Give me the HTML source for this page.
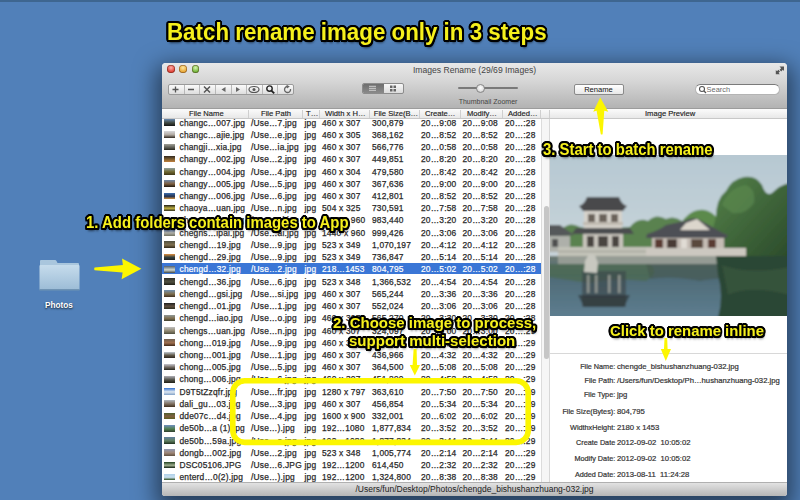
<!DOCTYPE html>
<html><head><meta charset="utf-8">
<style>
*{margin:0;padding:0;box-sizing:border-box}
html,body{width:800px;height:500px;overflow:hidden}
body{background:#5180b9;font-family:"Liberation Sans",sans-serif;position:relative}
.abs{position:absolute}
#topstrip{position:absolute;left:0;top:0;width:800px;height:2px;background:#3e6690}
#win{position:absolute;left:162px;top:63px;width:625px;height:433px;background:#fff;border-radius:4px 4px 3px 3px;overflow:hidden;
 box-shadow:0 8px 22px 6px rgba(0,0,0,0.5)}
#tb{position:absolute;left:0;top:0;width:625px;height:46px;background:linear-gradient(#e8e8e8,#d6d6d6 40%,#b3b3b3);border-bottom:1px solid #9c9c9c}
.tl{position:absolute;top:2.3px;width:7.6px;height:7.6px;border-radius:50%;box-shadow:inset 0 0 0 0.7px rgba(60,20,0,.45)}
#title{position:absolute;left:0;width:625px;top:2.2px;text-align:center;font-size:8.6px;color:#444;line-height:10px}
#seg{position:absolute;left:6px;top:21px;width:126px;height:11px;border:1px solid #9a9a9a;border-radius:2px;background:linear-gradient(#fafafa,#dedede);display:flex}
#seg div{flex:1;border-right:1px solid #b8b8b8;position:relative}
#seg div:last-child{border-right:none}
#hdr{position:absolute;left:0;top:46px;width:625px;height:10px;background:linear-gradient(#fbfbfb,#e8e8e8);border-bottom:1px solid #c8c8c8}
#hdr span{position:absolute;top:0px;font-size:7.6px;color:#222;-webkit-text-stroke:0.15px #222;white-space:nowrap;line-height:10px}
.vsep{position:absolute;top:1px;width:1px;height:8px;background:#cfcfcf}
#tbl{position:absolute;left:0;top:56px;width:379px;height:363px;overflow:hidden}
.row{position:absolute;left:0;width:379px;height:12.23px;margin-top:-119px}
.row span{position:absolute;top:0;line-height:12.23px;font-size:8.4px;letter-spacing:0.2px;color:#2a2a2a;white-space:nowrap;-webkit-text-stroke:0.25px #2a2a2a}
.row.sel::before{content:"";position:absolute;left:0;top:-0.8px;width:379px;height:11.1px;background:#3a76d6}
.row.sel span{color:#fff;-webkit-text-stroke:0.2px #fff}
.th{position:absolute;left:2.3px;top:2.6px;width:11px;height:6.6px;display:block;filter:blur(0.3px)}
#scroll{position:absolute;left:379px;top:56px;width:9px;height:363px;background:#f6f6f6;border-left:1px solid #dcdcdc;border-right:1px solid #d8d8d8}
#thumb{position:absolute;left:1.8px;top:87.4px;width:5.4px;height:153px;border-radius:3px;background:#c6c6c6}
#right{position:absolute;left:388px;top:46px;width:237px;height:373px;background:#fff}
.lab{position:absolute;right:171.8px;font-size:7.25px;color:#333;-webkit-text-stroke:0.2px #333;white-space:nowrap;line-height:10px;margin-top:-2.2px}
.val{position:absolute;left:67px;font-size:7.7px;color:#333;-webkit-text-stroke:0.2px #333;white-space:nowrap;line-height:10px;margin-top:-2.2px}
#status{position:absolute;left:0;top:419px;width:625px;height:14px;background:linear-gradient(#e2e2e2,#b6b6b6);border-top:1px solid #b0b0b0}
.ann{position:absolute;font-weight:bold;color:#f6f01c;white-space:nowrap;transform-origin:0 0;
 text-shadow:2px 0 0 #000,-2px 0 0 #000,0 2px 0 #000,0 -2px 0 #000,1.5px 1.5px 0 #000,-1.5px -1.5px 0 #000,1.5px -1.5px 0 #000,-1.5px 1.5px 0 #000,
 1px 0 0 #000,-1px 0 0 #000,0 1px 0 #000,0 -1px 0 #000,2px 1px 0 #000,-2px 1px 0 #000,2px -1px 0 #000,-2px -1px 0 #000,1px 2px 0 #000,-1px 2px 0 #000,1px -2px 0 #000,-1px -2px 0 #000,1px 2.5px 2.5px rgba(0,0,0,.6)}
</style></head><body>
<div id="topstrip"></div>

<!-- desktop folder -->
<svg class="abs" style="left:38px;top:258px" width="44" height="36" viewBox="0 0 44 36">
 <defs><linearGradient id="fg" x1="0" y1="0" x2="0" y2="1"><stop offset="0" stop-color="#c6dcec"/><stop offset="1" stop-color="#9cbcd6"/></linearGradient></defs>
 <path d="M2 3 Q2 2 3 2 L17 2 Q18 2 18.5 3 L19.5 5 L40 5 Q41 5 41 6 L41 10 L2 10 Z" fill="#a9c6dd"/>
 <path d="M1.5 8 Q1.5 7 2.5 7 L40.5 7 Q41.5 7 41.5 8 L41.5 31 Q41.5 32 40.5 32 L2.5 32 Q1.5 32 1.5 31 Z" fill="url(#fg)"/>
 <rect x="1.5" y="31" width="40" height="1.5" fill="#6f93b3"/>
</svg>
<div class="abs" style="left:45px;top:300.5px;font-size:8.2px;font-weight:bold;color:#fff;text-shadow:0 1px 2px rgba(0,0,0,.8)">Photos</div>

<div id="win">
 <div id="tb">
  <div class="tl" style="left:5px;top:2.4px;background:radial-gradient(circle at 50% 35%,#ffb0a8,#e0443a 60%,#a82a20)"></div>
  <div class="tl" style="left:17.4px;top:2.4px;background:radial-gradient(circle at 50% 35%,#ffe9a0,#e8a83a 60%,#b07820)"></div>
  <div class="tl" style="left:29.8px;top:2.4px;background:radial-gradient(circle at 50% 35%,#d8f5b0,#78b840 60%,#4a8a28)"></div>
  <div id="title">Images Rename (29/69 Images)</div>
  <div id="seg">
   <div></div><div></div><div></div><div></div><div></div><div></div><div></div><div></div>
  </div>
  <svg class="abs" style="left:6px;top:21px" width="126" height="11" viewBox="0 0 126 11">
   <g stroke="#555" stroke-width="1.3" fill="none">
    <path d="M4.5 5.5 H10.5 M7.5 2.5 V8.5"/>
    <path d="M20 5.5 H26"/>
    <path d="M36 2.5 L42 8.5 M42 2.5 L36 8.5" stroke-width="1.5"/>
   </g>
   <path d="M53.5 5.5 L57.5 3 V8 Z" fill="#666"/>
   <path d="M68 3 L72 5.5 L68 8 Z" fill="#666"/>
   <ellipse cx="86" cy="5.5" rx="5" ry="3" fill="none" stroke="#555" stroke-width="1.2"/>
   <circle cx="86" cy="5.5" r="1.5" fill="#555"/>
   <circle cx="101.5" cy="4.6" r="2.7" fill="none" stroke="#222" stroke-width="1.4"/>
   <path d="M103.4 6.6 L106.2 9.4" stroke="#222" stroke-width="1.9"/>
   <path d="M122.5 5 A3 3 0 1 1 119.5 2.5" fill="none" stroke="#666" stroke-width="1.3"/>
   <path d="M118.5 0.8 L121.8 2.6 L119 4.6 Z" fill="#666"/>
  </svg>
  <!-- view toggle -->
  <div class="abs" style="left:200px;top:20px;width:42px;height:11px;border:1px solid #8c8c8c;border-radius:2px;overflow:hidden;background:linear-gradient(#f8f8f8,#dcdcdc)">
   <div class="abs" style="left:0;top:0;width:21px;height:9px;background:linear-gradient(#6e6e6e,#8a8a8a)"></div>
  </div>
  <svg class="abs" style="left:200px;top:20px" width="42" height="11">
   <g stroke="#d8d8d8" stroke-width="0.9"><path d="M7 3.3H14M7 5.3H14M7 7.3H14"/></g>
   <g fill="#666"><rect x="28" y="2.5" width="2.5" height="2.5"/><rect x="31.5" y="2.5" width="2.5" height="2.5"/><rect x="28" y="6" width="2.5" height="2.5"/><rect x="31.5" y="6" width="2.5" height="2.5"/></g>
  </svg>
  <!-- slider -->
  <div class="abs" style="left:296px;top:24.3px;width:60px;height:2px;border-radius:1px;background:#7a7a7a"></div>
  <div class="abs" style="left:313.5px;top:20.8px;width:9px;height:9px;border-radius:50%;background:radial-gradient(circle at 50% 40%,#fff,#e0e0e0 60%,#a0a0a0);border:0.5px solid #888"></div>
  <div class="abs" style="left:296px;top:34.5px;width:60px;text-align:center;font-size:7px;color:#444;white-space:nowrap">Thumbnail Zoomer</div>
  <!-- rename button -->
  <div class="abs" style="left:411.5px;top:21px;width:50px;height:11px;border:1px solid #8a8a8a;border-radius:2px;background:linear-gradient(#ffffff,#e8e8e8);font-size:7.6px;line-height:9px;text-align:center;color:#111">Rename</div>
  <!-- search -->
  <div class="abs" style="left:532.5px;top:21px;width:85px;height:10.5px;border:1px solid #b4b4b4;border-top-color:#7a7a7a;border-radius:6px;background:#fff"></div>
  <svg class="abs" style="left:536px;top:22px" width="10" height="10"><circle cx="4" cy="4" r="2.5" fill="none" stroke="#555" stroke-width="1.1"/><path d="M5.8 5.8 L8 8" stroke="#555" stroke-width="1.3"/></svg>
  <div class="abs" style="left:544.6px;top:22px;font-size:7.4px;line-height:9px;color:#6a6a6a">Search</div>
  <svg class="abs" style="left:613px;top:2px" width="10" height="10"><g fill="#555"><path d="M4.5 1.5 H9 V6 L7.8 4.8 L6.2 6.4 L4.6 4.8 L6.2 3.2 Z"/><path d="M0.8 9.2 V5 L2 6.2 L3.4 4.8 L5 6.4 L3.6 7.8 L4.8 9.2 Z"/></g></svg>
 </div>

 <div id="hdr">
  <span style="left:27px">File Name</span>
  <div class="vsep" style="left:86px"></div>
  <span style="left:99px">File Path</span>
  <div class="vsep" style="left:139.6px"></div>
  <span style="left:144px">T…</span>
  <div class="vsep" style="left:157.4px"></div>
  <span style="left:163px">Width x H…</span>
  <div class="vsep" style="left:207px"></div>
  <span style="left:211.8px">File Size(B…</span>
  <div class="vsep" style="left:257px"></div>
  <span style="left:263px">Create…</span>
  <div class="vsep" style="left:298px"></div>
  <span style="left:305px">Modify…</span>
  <div class="vsep" style="left:340px"></div>
  <span style="left:346px">Added…</span>
  <div class="vsep" style="left:378px"></div>
  <div class="vsep" style="left:387px"></div>
  <span style="left:483px">Image Preview</span>
 </div>

 <div id="tbl">
<div class="row" style="top:116.60px">
<i class="th" style="background:linear-gradient(#6a8ab0,#404840 55%,#151515)"></i>
<span style="left:17.5px">changc…007.jpg</span>
<span style="left:89.0px">/Use…7.jpg</span>
<span style="left:142.5px">jpg</span>
<span style="left:160.0px">460 x 307</span>
<span style="left:210.0px">300,879</span>
<span style="left:259.0px">20…9:08</span>
<span style="left:300.5px">20…9:08</span>
<span style="left:343.0px">20…:28</span>
</div>
<div class="row" style="top:128.83px">
<i class="th" style="background:linear-gradient(#d8d8dc,#b0a8a0 55%,#302820)"></i>
<span style="left:17.5px">changc…ajie.jpg</span>
<span style="left:89.0px">/Use…e.jpg</span>
<span style="left:142.5px">jpg</span>
<span style="left:160.0px">460 x 305</span>
<span style="left:210.0px">368,162</span>
<span style="left:259.0px">20…8:52</span>
<span style="left:300.5px">20…8:52</span>
<span style="left:343.0px">20…:28</span>
</div>
<div class="row" style="top:141.06px">
<i class="th" style="background:linear-gradient(#a0a098,#606058 55%,#282820)"></i>
<span style="left:17.5px">changji…xia.jpg</span>
<span style="left:89.0px">/Use…ia.jpg</span>
<span style="left:142.5px">jpg</span>
<span style="left:160.0px">460 x 307</span>
<span style="left:210.0px">566,776</span>
<span style="left:259.0px">20…0:58</span>
<span style="left:300.5px">20…0:58</span>
<span style="left:343.0px">20…:28</span>
</div>
<div class="row" style="top:153.29px">
<i class="th" style="background:linear-gradient(#302820,#806030 55%,#c08040)"></i>
<span style="left:17.5px">changy…002.jpg</span>
<span style="left:89.0px">/Use…2.jpg</span>
<span style="left:142.5px">jpg</span>
<span style="left:160.0px">460 x 307</span>
<span style="left:210.0px">449,851</span>
<span style="left:259.0px">20…8:20</span>
<span style="left:300.5px">20…8:20</span>
<span style="left:343.0px">20…:28</span>
</div>
<div class="row" style="top:165.52px">
<i class="th" style="background:linear-gradient(#90a0a0,#706830 55%,#403818)"></i>
<span style="left:17.5px">changy…004.jpg</span>
<span style="left:89.0px">/Use…4.jpg</span>
<span style="left:142.5px">jpg</span>
<span style="left:160.0px">460 x 304</span>
<span style="left:210.0px">479,580</span>
<span style="left:259.0px">20…8:42</span>
<span style="left:300.5px">20…8:42</span>
<span style="left:343.0px">20…:28</span>
</div>
<div class="row" style="top:177.75px">
<i class="th" style="background:linear-gradient(#7088a8,#806040 55%,#201810)"></i>
<span style="left:17.5px">changy…005.jpg</span>
<span style="left:89.0px">/Use…5.jpg</span>
<span style="left:142.5px">jpg</span>
<span style="left:160.0px">460 x 307</span>
<span style="left:210.0px">367,636</span>
<span style="left:259.0px">20…9:00</span>
<span style="left:300.5px">20…9:00</span>
<span style="left:343.0px">20…:28</span>
</div>
<div class="row" style="top:189.98px">
<i class="th" style="background:linear-gradient(#4070b0,#203050 55%,#d09040)"></i>
<span style="left:17.5px">changy…006.jpg</span>
<span style="left:89.0px">/Use…6.jpg</span>
<span style="left:142.5px">jpg</span>
<span style="left:160.0px">460 x 307</span>
<span style="left:210.0px">412,801</span>
<span style="left:259.0px">20…8:52</span>
<span style="left:300.5px">20…8:52</span>
<span style="left:343.0px">20…:28</span>
</div>
<div class="row" style="top:202.21px">
<i class="th" style="background:linear-gradient(#202018,#c0b040 55%,#303020)"></i>
<span style="left:17.5px">chaoya…uan.jpg</span>
<span style="left:89.0px">/Use…n.jpg</span>
<span style="left:142.5px">jpg</span>
<span style="left:160.0px">504 x 325</span>
<span style="left:210.0px">730,591</span>
<span style="left:259.0px">20…7:58</span>
<span style="left:300.5px">20…7:58</span>
<span style="left:343.0px">20…:28</span>
</div>
<div class="row" style="top:214.44px">
<i class="th" style="background:linear-gradient(#a0a8b0,#808070 55%,#404030)"></i>
<span style="left:17.5px">chegns…ipai.jpg</span>
<span style="left:89.0px">/Use…ai.jpg</span>
<span style="left:142.5px">jpg</span>
<span style="left:160.0px">1440 x 960</span>
<span style="left:210.0px">983,440</span>
<span style="left:259.0px">20…3:20</span>
<span style="left:300.5px">20…3:20</span>
<span style="left:343.0px">20…:28</span>
</div>
<div class="row" style="top:226.67px">
<i class="th" style="background:linear-gradient(#5070a8,#b0b0a8 55%,#707060)"></i>
<span style="left:17.5px">chegns…ipai.jpg</span>
<span style="left:89.0px">/Use…ai.jpg</span>
<span style="left:142.5px">jpg</span>
<span style="left:160.0px">1440 x 960</span>
<span style="left:210.0px">999,426</span>
<span style="left:259.0px">20…3:06</span>
<span style="left:300.5px">20…3:06</span>
<span style="left:343.0px">20…:28</span>
</div>
<div class="row" style="top:238.90px">
<i class="th" style="background:linear-gradient(#505040,#807050 55%,#302818)"></i>
<span style="left:17.5px">chengd…19.jpg</span>
<span style="left:89.0px">/Use…9.jpg</span>
<span style="left:142.5px">jpg</span>
<span style="left:160.0px">523 x 349</span>
<span style="left:210.0px">1,070,197</span>
<span style="left:259.0px">20…4:12</span>
<span style="left:300.5px">20…4:12</span>
<span style="left:343.0px">20…:28</span>
</div>
<div class="row" style="top:251.13px">
<i class="th" style="background:linear-gradient(#e09040,#304040 55%,#202020)"></i>
<span style="left:17.5px">chengd…29.jpg</span>
<span style="left:89.0px">/Use…9.jpg</span>
<span style="left:142.5px">jpg</span>
<span style="left:160.0px">523 x 349</span>
<span style="left:210.0px">736,847</span>
<span style="left:259.0px">20…5:14</span>
<span style="left:300.5px">20…5:14</span>
<span style="left:343.0px">20…:28</span>
</div>
<div class="row sel" style="top:263.36px">
<i class="th" style="background:linear-gradient(#506070,#d0d8d0 55%,#404848)"></i>
<span style="left:17.5px">chengd…32.jpg</span>
<span style="left:89.0px">/Use…2.jpg</span>
<span style="left:142.5px">jpg</span>
<span style="left:160.0px">218…1453</span>
<span style="left:210.0px">804,795</span>
<span style="left:259.0px">20…5:02</span>
<span style="left:300.5px">20…5:02</span>
<span style="left:343.0px">20…:28</span>
</div>
<div class="row" style="top:275.59px">
<i class="th" style="background:linear-gradient(#303028,#505040 55%,#202018)"></i>
<span style="left:17.5px">chengd…36.jpg</span>
<span style="left:89.0px">/Use…6.jpg</span>
<span style="left:142.5px">jpg</span>
<span style="left:160.0px">523 x 348</span>
<span style="left:210.0px">1,366,532</span>
<span style="left:259.0px">20…4:54</span>
<span style="left:300.5px">20…4:54</span>
<span style="left:343.0px">20…:28</span>
</div>
<div class="row" style="top:287.82px">
<i class="th" style="background:linear-gradient(#7090b0,#807050 55%,#403020)"></i>
<span style="left:17.5px">chengd…gsi.jpg</span>
<span style="left:89.0px">/Use…si.jpg</span>
<span style="left:142.5px">jpg</span>
<span style="left:160.0px">460 x 307</span>
<span style="left:210.0px">565,244</span>
<span style="left:259.0px">20…3:36</span>
<span style="left:300.5px">20…3:36</span>
<span style="left:343.0px">20…:28</span>
</div>
<div class="row" style="top:300.05px">
<i class="th" style="background:linear-gradient(#202020,#605040 55%,#303020)"></i>
<span style="left:17.5px">chengd…01.jpg</span>
<span style="left:89.0px">/Use…1.jpg</span>
<span style="left:142.5px">jpg</span>
<span style="left:160.0px">460 x 307</span>
<span style="left:210.0px">552,024</span>
<span style="left:259.0px">20…3:06</span>
<span style="left:300.5px">20…3:06</span>
<span style="left:343.0px">20…:28</span>
</div>
<div class="row" style="top:312.28px">
<i class="th" style="background:linear-gradient(#909898,#807050 55%,#404030)"></i>
<span style="left:17.5px">chengd…iao.jpg</span>
<span style="left:89.0px">/Use…o.jpg</span>
<span style="left:142.5px">jpg</span>
<span style="left:160.0px">460 x 307</span>
<span style="left:210.0px">565,270</span>
<span style="left:259.0px">20…3:30</span>
<span style="left:300.5px">20…3:30</span>
<span style="left:343.0px">20…:28</span>
</div>
<div class="row" style="top:324.51px">
<i class="th" style="background:linear-gradient(#c0c0c0,#908870 55%,#505040)"></i>
<span style="left:17.5px">chengs…uan.jpg</span>
<span style="left:89.0px">/Use…n.jpg</span>
<span style="left:142.5px">jpg</span>
<span style="left:160.0px">460 x 307</span>
<span style="left:210.0px">324,097</span>
<span style="left:259.0px">20…3:00</span>
<span style="left:300.5px">20…3:00</span>
<span style="left:343.0px">20…:29</span>
</div>
<div class="row" style="top:336.74px">
<i class="th" style="background:linear-gradient(#706050,#a07050 55%,#402818)"></i>
<span style="left:17.5px">chong…019.jpg</span>
<span style="left:89.0px">/Use…9.jpg</span>
<span style="left:142.5px">jpg</span>
<span style="left:160.0px">460 x 307</span>
<span style="left:210.0px">451,886</span>
<span style="left:259.0px">20…4:20</span>
<span style="left:300.5px">20…4:20</span>
<span style="left:343.0px">20…:29</span>
</div>
<div class="row" style="top:348.97px">
<i class="th" style="background:linear-gradient(#c0c8d0,#605848 55%,#302820)"></i>
<span style="left:17.5px">chong…001.jpg</span>
<span style="left:89.0px">/Use…1.jpg</span>
<span style="left:142.5px">jpg</span>
<span style="left:160.0px">460 x 307</span>
<span style="left:210.0px">436,966</span>
<span style="left:259.0px">20…4:32</span>
<span style="left:300.5px">20…4:32</span>
<span style="left:343.0px">20…:29</span>
</div>
<div class="row" style="top:361.20px">
<i class="th" style="background:linear-gradient(#c8c8d0,#706860 55%,#282820)"></i>
<span style="left:17.5px">chong…005.jpg</span>
<span style="left:89.0px">/Use…5.jpg</span>
<span style="left:142.5px">jpg</span>
<span style="left:160.0px">460 x 307</span>
<span style="left:210.0px">364,500</span>
<span style="left:259.0px">20…5:08</span>
<span style="left:300.5px">20…5:08</span>
<span style="left:343.0px">20…:29</span>
</div>
<div class="row" style="top:373.43px">
<i class="th" style="background:linear-gradient(#b0b0b8,#505048 55%,#202018)"></i>
<span style="left:17.5px">chong…006.jpg</span>
<span style="left:89.0px">/Use…6.jpg</span>
<span style="left:142.5px">jpg</span>
<span style="left:160.0px">460 x 307</span>
<span style="left:210.0px">451,290</span>
<span style="left:259.0px">20…4:52</span>
<span style="left:300.5px">20…4:52</span>
<span style="left:343.0px">20…:29</span>
</div>
<div class="row" style="top:385.66px">
<i class="th" style="background:linear-gradient(#3070d0,#e0e8f0 55%,#80a0c8)"></i>
<span style="left:17.5px">D9T5tZzqfr.jpg</span>
<span style="left:89.0px">/Use…fr.jpg</span>
<span style="left:142.5px">jpg</span>
<span style="left:160.0px">1280 x 797</span>
<span style="left:210.0px">363,610</span>
<span style="left:259.0px">20…7:50</span>
<span style="left:300.5px">20…7:50</span>
<span style="left:343.0px">20…:29</span>
</div>
<div class="row" style="top:397.89px">
<i class="th" style="background:linear-gradient(#b0b8c0,#807060 55%,#403020)"></i>
<span style="left:17.5px">dali_gu…03.jpg</span>
<span style="left:89.0px">/Use…3.jpg</span>
<span style="left:142.5px">jpg</span>
<span style="left:160.0px">460 x 307</span>
<span style="left:210.0px">456,854</span>
<span style="left:259.0px">20…5:34</span>
<span style="left:300.5px">20…5:34</span>
<span style="left:343.0px">20…:29</span>
</div>
<div class="row" style="top:410.12px">
<i class="th" style="background:linear-gradient(#506030,#806040 55%,#606020)"></i>
<span style="left:17.5px">dde07c…d4.jpg</span>
<span style="left:89.0px">/Use…4.jpg</span>
<span style="left:142.5px">jpg</span>
<span style="left:160.0px">1600 x 900</span>
<span style="left:210.0px">332,001</span>
<span style="left:259.0px">20…6:02</span>
<span style="left:300.5px">20…6:02</span>
<span style="left:343.0px">20…:29</span>
</div>
<div class="row" style="top:422.35px">
<i class="th" style="background:linear-gradient(#7090c0,#508050 55%,#304030)"></i>
<span style="left:17.5px">de50b…a (1).jpg</span>
<span style="left:89.0px">/Use…).jpg</span>
<span style="left:142.5px">jpg</span>
<span style="left:160.0px">192…1080</span>
<span style="left:210.0px">1,877,834</span>
<span style="left:259.0px">20…3:52</span>
<span style="left:300.5px">20…3:52</span>
<span style="left:343.0px">20…:29</span>
</div>
<div class="row" style="top:434.58px">
<i class="th" style="background:linear-gradient(#6080a0,#608060 55%,#203020)"></i>
<span style="left:17.5px">de50b…59a.jpg</span>
<span style="left:89.0px">/Use…a.jpg</span>
<span style="left:142.5px">jpg</span>
<span style="left:160.0px">192…1080</span>
<span style="left:210.0px">1,877,834</span>
<span style="left:259.0px">20…3:44</span>
<span style="left:300.5px">20…3:44</span>
<span style="left:343.0px">20…:29</span>
</div>
<div class="row" style="top:446.81px">
<i class="th" style="background:linear-gradient(#9098b0,#a08878 55%,#605040)"></i>
<span style="left:17.5px">dongb…002.jpg</span>
<span style="left:89.0px">/Use…2.jpg</span>
<span style="left:142.5px">jpg</span>
<span style="left:160.0px">523 x 348</span>
<span style="left:210.0px">1,005,774</span>
<span style="left:259.0px">20…2:14</span>
<span style="left:300.5px">20…2:14</span>
<span style="left:343.0px">20…:29</span>
</div>
<div class="row" style="top:459.04px">
<i class="th" style="background:linear-gradient(#204020,#a0b090 55%,#102010)"></i>
<span style="left:17.5px">DSC05106.JPG</span>
<span style="left:89.0px">/Use…6.JPG</span>
<span style="left:142.5px">jpg</span>
<span style="left:160.0px">192…1200</span>
<span style="left:210.0px">614,450</span>
<span style="left:259.0px">20…2:32</span>
<span style="left:300.5px">20…2:32</span>
<span style="left:343.0px">20…:29</span>
</div>
<div class="row" style="top:471.27px">
<i class="th" style="background:linear-gradient(#b0d0e8,#c8e0f0 55%,#305020)"></i>
<span style="left:17.5px">enterd…0(2).jpg</span>
<span style="left:89.0px">/Use…).jpg</span>
<span style="left:142.5px">jpg</span>
<span style="left:160.0px">192…1200</span>
<span style="left:210.0px">1,324,800</span>
<span style="left:259.0px">20…8:38</span>
<span style="left:300.5px">20…8:38</span>
<span style="left:343.0px">20…:29</span>
</div>
 </div>
 <div id="scroll"><div id="thumb"></div></div>

 <div id="right" style="top:56px;height:363px">
  <svg class="abs" style="left:0px;top:36px" width="237" height="161" viewBox="0 0 237 161">
   <defs>
    <linearGradient id="sky" x1="0" y1="0" x2="0" y2="1"><stop offset="0" stop-color="#b6c8d2"/><stop offset="0.55" stop-color="#c6d3d9"/><stop offset="1" stop-color="#d0d8dc"/></linearGradient>
    <linearGradient id="wat" x1="0" y1="0" x2="0" y2="1"><stop offset="0" stop-color="#6c7a72"/><stop offset="0.3" stop-color="#4e6a76"/><stop offset="1" stop-color="#5e7e90"/></linearGradient>
    <linearGradient id="tr" x1="0" y1="0" x2="1" y2="1"><stop offset="0" stop-color="#55824a"/><stop offset="1" stop-color="#2a4a2a"/></linearGradient>
    <filter id="bl" x="-5%" y="-5%" width="110%" height="110%"><feGaussianBlur stdDeviation="1"/></filter>
   </defs>
   <g filter="url(#bl)">
   <rect x="-2" y="-2" width="241" height="165" fill="url(#sky)"/>
   <!-- trees behind -->
   <path d="M-2 78 Q4 70 12 74 Q20 66 30 72 L40 74 L80 72 Q88 62 98 66 Q106 58 116 64 Q124 60 132 66 L132 96 L-2 96 Z" fill="#5a8250"/>
   <path d="M128 96 Q126 70 136 62 Q146 52 158 56 Q168 60 170 70 L170 96 Z" fill="#5c8a4c"/>
   <!-- big tree right -->
   <path d="M162 104 Q160 80 166 62 Q166 44 176 36 Q182 24 194 22 Q206 20 212 30 Q216 42 222 38 Q230 30 239 28 L239 106 Z" fill="url(#tr)"/>
   <path d="M172 50 Q180 32 196 30 Q206 34 204 48 Q196 60 182 58 Z" fill="#5e8c50" opacity="0.6"/>
   <!-- left building -->
   <path d="M-2 70 L10 70 L24 80 L-2 82 Z" fill="#55585a"/>
   <rect x="-2" y="81" width="22" height="16" fill="#aeb0aa"/>
   <rect x="2" y="84" width="6" height="8" fill="#505050"/>
   <!-- pagoda -->
   <path d="M29 51 Q34 50 37 42 L69 42 Q72 50 77 51 L73 56 L33 56 Z" fill="#48494c"/>
   <rect x="34" y="56" width="38" height="17" fill="#d6d2ca"/>
   <rect x="38" y="59" width="7" height="8" fill="#6a625a"/><rect x="49" y="59" width="8" height="8" fill="#6a625a"/><rect x="61" y="59" width="7" height="8" fill="#6a625a"/>
   <rect x="33" y="67" width="40" height="3" fill="#c0bab0"/>
   <path d="M26 73 L80 73 L84 79 L22 79 Z" fill="#4c4d50"/>
   <rect x="33" y="79" width="40" height="14" fill="#c8c4bc"/>
   <rect x="37" y="81" width="7" height="11" fill="#4a4440"/><rect x="48" y="81" width="10" height="11" fill="#4a4440"/><rect x="62" y="81" width="7" height="11" fill="#4a4440"/>
   <!-- pavilion -->
   <path d="M97 79 Q108 76 116 70 L134 66 Q142 62 148 64 L166 74 Q172 78 178 80 L176 83 L96 83 Z" fill="#4e5054"/>
   <path d="M136 68 L147 64 L160 75 L130 75 Z" fill="#dcd6cc"/>
   <rect x="102" y="83" width="72" height="11" fill="#c4bcb4"/>
   <rect x="105" y="84" width="8" height="10" fill="#5a3a32"/><rect x="117" y="84" width="10" height="10" fill="#4a3a34"/><rect x="131" y="84" width="6" height="10" fill="#e0dcd4"/><rect x="141" y="84" width="12" height="10" fill="#5a4a3c"/><rect x="158" y="84" width="8" height="10" fill="#5a3a32"/>
   <!-- platform -->
   <rect x="8" y="92" width="96" height="10" fill="#c2c2b8"/>
   <rect x="8" y="96" width="96" height="1" fill="#9a9a90"/>
   <rect x="96" y="93" width="100" height="9" fill="#ccc8c0"/>
   <rect x="8" y="101" width="188" height="3" fill="#808078"/>
   <!-- water -->
   <rect x="-2" y="101" width="241" height="62" fill="url(#wat)"/>
   <rect x="8" y="101" width="188" height="8" fill="#9ea29a" opacity="0.85"/>
   <path d="M-2 109 L100 109 Q110 118 96 126 Q60 122 40 128 Q10 124 -2 122 Z" fill="#4c6a50" opacity="0.75"/>
   <path d="M96 109 L196 109 L196 124 Q170 122 150 126 Q120 120 100 124 Z" fill="#44564c" opacity="0.6"/>
   <rect x="32" y="116" width="44" height="36" fill="#3c464a" opacity="0.65"/>
   <rect x="37" y="120" width="2.5" height="18" fill="#b0b0a8" opacity="0.7"/><rect x="45" y="120" width="2.5" height="18" fill="#b0b0a8" opacity="0.7"/>
   <rect x="58" y="120" width="2.5" height="18" fill="#b0b0a8" opacity="0.7"/><rect x="68" y="120" width="2.5" height="18" fill="#b0b0a8" opacity="0.7"/>
   <path d="M28 140 L80 140 L74 152 L34 152 Z" fill="#2e3438" opacity="0.7"/>
   <path d="M166 101 L239 101 L239 163 L168 163 Q174 140 168 120 Z" fill="#2c4634"/>
   <path d="M172 110 Q200 120 239 112 L239 140 Q200 130 178 140 Z" fill="#3c5a40" opacity="0.6"/>
   <path d="M34 117 L35 106 L39 99 L45 100 L48 108 L47 118 Z" fill="#c8c8c0"/>
   </g>
  </svg>
  <div class="abs" style="left:0;top:234px;width:237px;height:1px;background:#d8d8d8"></div>
  <div class="lab" style="top:245px">File Name:</div><div class="val" style="top:245px">chengde_bishushanzhuang-032.jpg</div>
  <div class="lab" style="top:259px">File Path:</div><div class="val" style="top:259px">/Users/fun/Desktop/Ph…hushanzhuang-032.jpg</div>
  <div class="lab" style="top:273px">File Type:</div><div class="val" style="top:273px">jpg</div>
  <div class="lab" style="top:290px">File Size(Bytes):</div><div class="val" style="top:290px">804,795</div>
  <div class="lab" style="top:306px">WidthxHeight:</div><div class="val" style="top:306px">2180 x 1453</div>
  <div class="lab" style="top:321px">Create Date</div><div class="val" style="top:321px">2012-09-02&nbsp; 10:05:02</div>
  <div class="lab" style="top:337px">Modify Date:</div><div class="val" style="top:337px">2012-09-02&nbsp; 10:05:02</div>
  <div class="lab" style="top:353px">Added Date:</div><div class="val" style="top:353px">2013-08-11&nbsp; 11:24:28</div>
 </div>
 <div id="status"><div class="abs" style="left:0;width:625px;top:1px;text-align:center;font-size:8.5px;color:#222;line-height:11px;padding-left:0">/Users/fun/Desktop/Photos/chengde_bishushanzhuang-032.jpg</div></div>
</div>

<!-- annotations -->
<div class="ann" style="left:166.70px;top:20.6px;font-size:23.47px;line-height:23.47px;transform:scaleX(0.951)">Batch rename image only in 3 steps</div>
<div class="ann" style="left:86.00px;top:213.90px;font-size:16.07px;line-height:16.07px;transform:scaleX(0.929)">1. Add folders contain images to App</div>
<div class="ann" style="left:543.45px;top:141.75px;font-size:15.65px;line-height:15.65px;transform:scaleX(0.952)">3. Start to batch rename</div>
<div class="ann" style="left:609.65px;top:323.00px;font-size:15.36px;line-height:15.36px;transform:scaleX(0.970)">Click to rename inline</div>
<div class="ann" style="left:332.75px;top:314.80px;font-size:15.36px;line-height:15.36px;transform:scaleX(0.976)">2. Choose image to process,</div>
<div class="ann" style="left:349.15px;top:332.60px;font-size:15.36px;line-height:15.36px;transform:scaleX(0.979)">support multi-selection</div>
<svg class="abs" style="left:0;top:0" width="800" height="500">
 <g fill="#fcf600">
  <path d="M94.6 267.6 Q93.6 269 94.6 270.3 L122.6 272.4 L121.6 279.2 L141.4 268.8 L122 258.4 L122.9 264.9 Z"/>
  <path d="M600.2 97.6 L608.3 111.8 L604.3 110.8 L602.6 134.2 Q601.6 135 600.8 134.2 L596.6 110.8 L593.2 111.8 Z"/>
  <path d="M413.6 349 L416.6 349 L417 365 L420 365 L414.8 375.5 L409.8 365 L412.6 365 Z"/>
  <path d="M664.5 338 L667.2 338 L667.6 349 L671 349 L665.8 361 L660.8 349 L664 349 Z"/>
 </g>
 <rect x="232.8" y="380.8" width="295.4" height="61.6" rx="12" ry="12" fill="none" stroke="#fcf600" stroke-width="5.6"/>
</svg>
</body></html>
